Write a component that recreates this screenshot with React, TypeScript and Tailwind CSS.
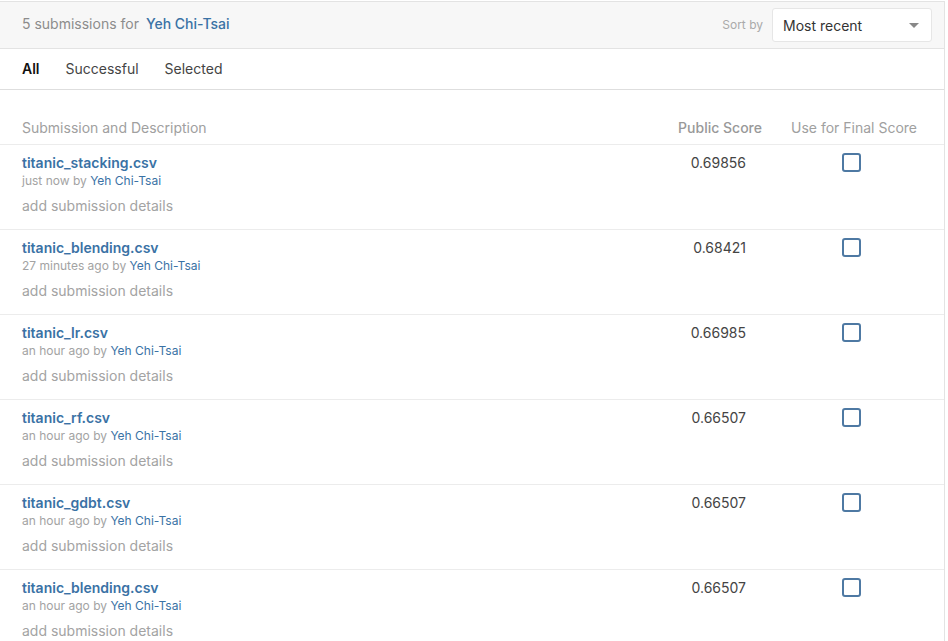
import React from "react";

const rows = [
  { name: "titanic_stacking.csv", when: "just now", score: "0.69856" },
  { name: "titanic_blending.csv", when: "27 minutes ago", score: "0.68421" },
  { name: "titanic_lr.csv", when: "an hour ago", score: "0.66985" },
  { name: "titanic_rf.csv", when: "an hour ago", score: "0.66507" },
  { name: "titanic_gdbt.csv", when: "an hour ago", score: "0.66507" },
  { name: "titanic_blending.csv", when: "an hour ago", score: "0.66507" },
];

export default function App() {
  return (
    <div className="h-[641px] w-[948px] overflow-hidden bg-white" style={{ fontFamily: 'Inter, "Liberation Sans", Arial, sans-serif' }}>
      <div className="mt-px w-[945px] border-t border-r border-[#e3e3e3]">
        <div className="flex h-[47px] items-center justify-between border-b border-[#e3e3e3] bg-[#f7f7f7] pb-[2px] pl-[22px] pr-[12px]">
          <div className="text-[14px] leading-[18px] text-[#8c8c8c]">
            5 submissions for <span className="ml-[3px] font-medium text-[#3a72a5]">Yeh Chi-Tsai</span>
          </div>
          <div className="mt-[2px] flex items-center gap-[9px]">
            <span className="text-[12px] text-[#aaaaaa]">Sort by</span>
            <div className="flex h-[34px] w-[160px] items-center justify-between rounded-[3px] border border-[#e6e6e6] bg-white pl-[10px] pr-[12px]">
              <span className="text-[14px] text-[#333333]">Most recent</span>
              <span className="h-0 w-0 border-x-[5px] border-t-[5px] border-x-transparent border-t-[#888888]" />
            </div>
          </div>
        </div>
        <div className="flex h-[41px] items-center gap-[26px] border-b border-[#dedede] pl-[22px] pb-[2px] text-[14px]">
          <span className="font-semibold text-[#111111]">All</span>
          <span className="text-[#444444]">Successful</span>
          <span className="text-[#444444]">Selected</span>
        </div>
        <div className="flex h-[55px] items-end border-b border-[#ececec] pb-[7px] pl-[22px] text-[14px] leading-[18px] text-[#a0a0a0]">
          <div className="flex-1">Submission and Description</div>
          <div className="shrink-0 font-medium text-[#999999]">Public Score</div>
          <div className="ml-[29px] w-[153px] shrink-0">Use for Final Score</div>
        </div>
        {rows.map((r, i) => (
          <div key={i} className="flex h-[85px] border-b border-[#ececec] pl-[22px] pt-[9px]">
            <div className="flex-1">
              <div className="text-[14px] font-semibold leading-[18px] text-[#3a72a5]">{r.name}</div>
              <div className="mt-[1px] text-[12px] leading-[16px] text-[#a3a3a3]">
                {r.when} by <span className="text-[#3a72a5]">Yeh Chi-Tsai</span>
              </div>
              <div className="mt-[8px] text-[14px] leading-[18px] text-[#a3a3a3]">add submission details</div>
            </div>
            <div className="shrink-0 text-right text-[14px] leading-[18px] text-[#444444]">{r.score}</div>
            <div className="ml-[96px] w-[102px] shrink-0">
              <div className="-mt-px h-[19px] w-[19px] rounded-[3px] border-2 border-[#4e79a3]" />
            </div>
          </div>
        ))}
      </div>
    </div>
  );
}
